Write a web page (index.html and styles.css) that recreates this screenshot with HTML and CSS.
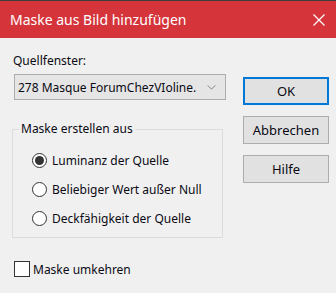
FILE: index.html
```html
<!DOCTYPE html>
<html lang="de">
	<head>
		<meta charset="UTF-8" />
		<title>Maske aus Bild hinzufügen</title>
		<link rel="stylesheet" href="styles.css">
	</head>
	<body>
		<div class="titlebar">
			<span class="title">Maske aus Bild hinzufügen</span>
			<svg class="close" viewBox="0 0 12 12" stroke="white" stroke-width="1.2">
				<path d="M0.5 0.5 11.5 11.5M11.5 0.5 0.5 11.5" />
			</svg>
		</div>
		<div class="content">
			<div class="left">
				<div class="label">Quellfenster:</div>
				<div class="select">
					<span class="select-text">278 Masque ForumChezVIoline.</span>
					<svg class="chevron" viewBox="0 0 10 6" fill="none" stroke="#707070" stroke-width="1">
						<path d="M0.5 0.5 5 5 9.5 0.5" />
					</svg>
				</div>
				<fieldset class="group">
					<legend>Maske erstellen aus</legend>
					<div class="radio-row">
						<span class="radio checked"><span class="dot"></span></span>
						Luminanz der Quelle
					</div>
					<div class="radio-row">
						<span class="radio"></span>
						Beliebiger Wert außer Null
					</div>
					<div class="radio-row">
						<span class="radio"></span>
						Deckfähigkeit der Quelle
					</div>
				</fieldset>
				<div class="check-row">
					<span class="checkbox"></span>
					Maske umkehren
				</div>
			</div>
			<div class="buttons">
				<button class="btn btn-default">OK</button>
				<button class="btn">Abbrechen</button>
				<button class="btn">Hilfe</button>
			</div>
		</div>
	</body>
</html>
```
FILE: styles.css
```css
body {
	margin: 0;
	background-color: #f0f0f0;
	font-family: "Noto Sans", sans-serif;
	font-size: 12px;
	color: #0a0a14;
}

.titlebar {
	display: flex;
	align-items: center;
	justify-content: space-between;
	height: 37px;
	border-top: 1px solid #3c3c3c;
	background-color: #d5343b;
	padding: 0 11px 0 10px;
}

.title {
	color: white;
	font-size: 14px;
}

.close {
	width: 12px;
	height: 12px;
}

.content {
	display: flex;
	padding: 15px 0 0 12px;
}

.left {
	width: 211px;
}

.label {
	line-height: 16px;
	padding-left: 1px;
}

.select {
	display: flex;
	align-items: center;
	justify-content: space-between;
	height: 24px;
	margin: 5px -3px 0 2px;
	border: 1px solid #adadad;
	background-color: #e5e5e5;
	padding: 0 9px 0 3px;
	font-size: 12px;
	white-space: nowrap;
}

.select-text {
	text-decoration: underline dotted;
	text-decoration-color: transparent;
}

.chevron {
	width: 9px;
	height: 5px;
}

.group {
	margin: 21px 0 0 0;
	padding: 9px 0 4px 19px;
	border: 1px solid #dcdcdc;
}

.group legend {
	padding: 0 2px;
	margin-left: -13px;
	line-height: 16px;
}

.radio-row {
	display: flex;
	align-items: center;
	gap: 5px;
	height: 29px;
}

.radio {
	display: flex;
	align-items: center;
	justify-content: center;
	width: 13px;
	height: 13px;
	border: 1px solid #333333;
	border-radius: 50%;
	background-color: white;
}

.dot {
	width: 9px;
	height: 9px;
	border-radius: 50%;
	background-color: #333333;
}

.check-row {
	display: flex;
	align-items: center;
	gap: 3px;
	height: 16px;
	margin: 23px 0 0 2px;
}

.checkbox {
	width: 14px;
	height: 14px;
	border: 1px solid #333333;
	background-color: white;
}

.buttons {
	display: flex;
	flex-direction: column;
	gap: 11px;
	margin: 24px 0 0 20px;
}

.btn {
	width: 86px;
	height: 28px;
	border: 1px solid #adadad;
	background-color: #e1e1e1;
	font-family: "Noto Sans", sans-serif;
	font-size: 13px;
	color: #0a0a14;
	padding: 0;
}

.btn-default {
	border: 2px solid #0078d7;
}
```
